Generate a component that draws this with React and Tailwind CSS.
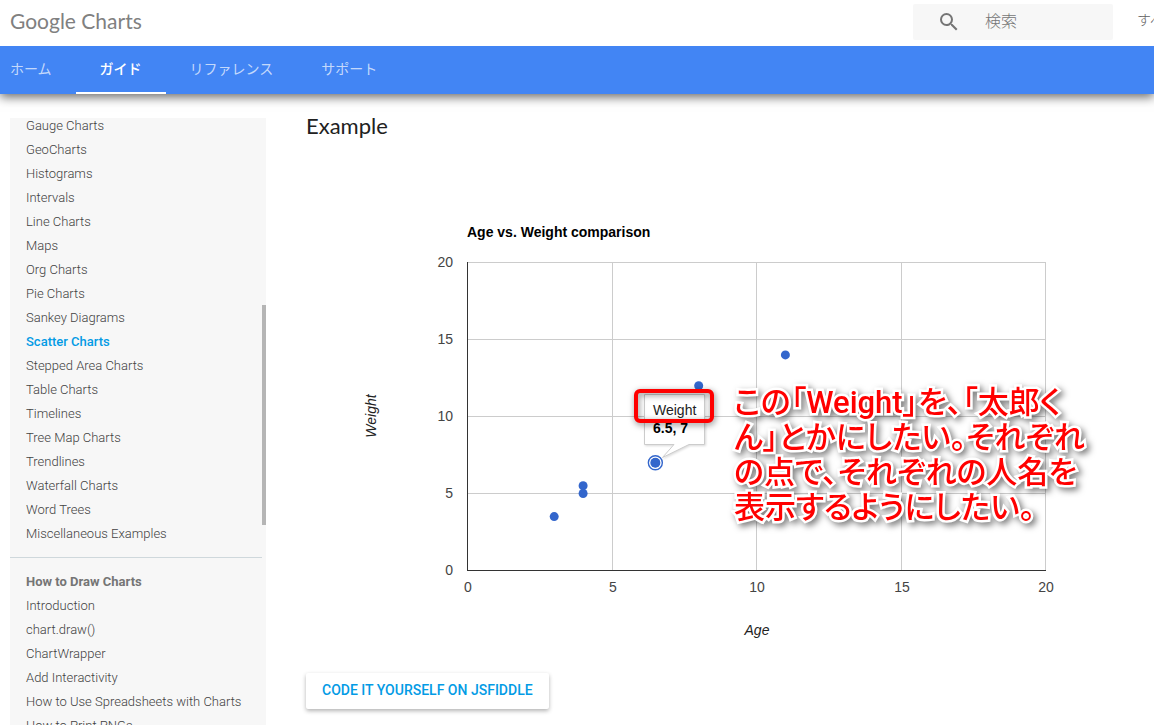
import { MdSearch } from "react-icons/md";

const tabs = ["ホーム", "ガイド", "リファレンス", "サポート"];

const chartTypes = [
  "Gauge Charts",
  "GeoCharts",
  "Histograms",
  "Intervals",
  "Line Charts",
  "Maps",
  "Org Charts",
  "Pie Charts",
  "Sankey Diagrams",
  "Scatter Charts",
  "Stepped Area Charts",
  "Table Charts",
  "Timelines",
  "Tree Map Charts",
  "Trendlines",
  "Waterfall Charts",
  "Word Trees",
  "Miscellaneous Examples",
];

const howTo = [
  "Introduction",
  "chart.draw()",
  "ChartWrapper",
  "Add Interactivity",
  "How to Use Spreadsheets with Charts",
  "How to Print PNGs",
];

const points = [
  [8, 12],
  [4, 5.5],
  [11, 14],
  [4, 5],
  [3, 3.5],
  [6.5, 7],
];

const ticks = [0, 5, 10, 15, 20];

// Plot area: 578 x 308, origin at (161, 403)
const px = (age) => 161 + age * 28.9;
const py = (weight) => 403 - weight * 15.4;

function Header() {
  return (
    <header className="relative z-20 flex h-[46px] shrink-0 items-start overflow-hidden bg-white pl-[10px]">
      <a href="#" className="pt-[3px] font-['Lato',sans-serif] text-[21px] leading-9 text-[#808080]">
        Google Charts
      </a>
      <form className="mt-1 ml-auto flex h-9 w-[200px] shrink-0 items-center rounded-xs bg-[#f7f7f7] pl-6">
        <label htmlFor="search">
          <MdSearch size={24} className="text-[#757575]" />
        </label>
        <input
          id="search"
          type="text"
          placeholder="検索"
          className="ml-6 w-24 bg-transparent text-base font-light outline-none placeholder:text-[#757575]"
        />
      </form>
      <button className="mt-1 ml-6 w-[17px] shrink-0 overflow-hidden text-left text-sm leading-8 font-light whitespace-nowrap text-[#616161]">
        すべて
      </button>
    </header>
  );
}

function Tabs() {
  return (
    <nav className="relative z-10 flex h-12 shrink-0 bg-[#4285f4] shadow-[0_3px_10px_rgba(0,0,0,0.6)]">
      <div className="-ml-[14px] flex">
        {tabs.map((tab) => (
          <a
            key={tab}
            href="#"
            className={
              tab === "ガイド"
                ? "border-b-2 border-white px-6 text-sm leading-[46px] font-medium text-white"
                : "px-6 text-sm leading-[46px] text-white/70"
            }
          >
            {tab}
          </a>
        ))}
      </div>
    </nav>
  );
}

function Sidebar() {
  return (
    <aside className="relative mt-6 ml-[10px] w-64 shrink-0 overflow-hidden bg-[#f7f7f7] text-[13px] leading-6 font-light text-[#424242]">
      <ul className="-mt-1 mr-1 border-b border-[#cfd8dc] pb-[11px] pl-4">
        {chartTypes.map((item) => (
          <li key={item}>
            <a href="#" className={item === "Scatter Charts" ? "font-medium text-[#039be5]" : ""}>
              {item}
            </a>
          </li>
        ))}
      </ul>
      <h3 className="mt-3 pl-4 font-bold text-[#757575]">How to Draw Charts</h3>
      <ul className="pl-4">
        {howTo.map((item) => (
          <li key={item}>
            <a href="#">{item}</a>
          </li>
        ))}
      </ul>
      {/* Scroll thumb */}
      <div className="absolute top-[187px] right-0 h-[220px] w-1 bg-[#b5b5b5]" />
    </aside>
  );
}

function ScatterChart() {
  return (
    <svg
      width="848"
      height="500"
      className="block font-['Liberation_Sans',Arial,sans-serif] text-sm"
      role="img"
      aria-label="Age vs. Weight comparison"
    >
      <text x="161" y="70" className="fill-black font-bold">
        Age vs. Weight comparison
      </text>

      {ticks.map((t) => (
        <g key={t} className="fill-[#444444]">
          <rect x={Math.round(px(t))} y="95" width="1" height="309" className="fill-[#cccccc]" />
          <rect x="161" y={Math.round(py(t))} width="579" height="1" className="fill-[#cccccc]" />
          <text x={Math.round(px(t)) + 1} y="425" textAnchor="middle">{t}</text>
          <text x="147" y={py(t) + 5} textAnchor="end">{t}</text>
        </g>
      ))}
      <rect x="161" y="95" width="1" height="309" className="fill-[#333333]" />
      <rect x="161" y="403" width="579" height="1" className="fill-[#333333]" />

      <text x="451" y="468" textAnchor="middle" className="fill-[#222222] italic">Age</text>
      <text transform="translate(70 249) rotate(-90)" textAnchor="middle" className="fill-[#222222] italic">
        Weight
      </text>

      {points.map(([age, weight]) => (
        <circle key={`${age}-${weight}`} cx={px(age) + 0.5} cy={py(weight) + 0.5} r="4.5" fill="#3366cc" />
      ))}
      {/* Selected point */}
      <circle cx={px(6.5) + 0.5} cy={py(7) + 0.5} r="5" fill="#3366cc" />
      <circle cx={px(6.5) + 0.5} cy={py(7) + 0.5} r="7" fill="none" stroke="#3366cc" strokeWidth="1.4" />

      {/* Tooltip */}
      <path
        d="M338.5 227.5H398.5V277.5H383L356.5 290.5L368 277.5H338.5Z"
        fill="#ffffff"
        stroke="#cccccc"
        className="drop-shadow-[1px_1px_1px_rgba(0,0,0,0.15)]"
      />
      <text x="347" y="248" className="fill-[#222222]">Weight</text>
      <text x="347" y="266" className="fill-black font-bold">6.5, 7</text>
      <rect
        x="330"
        y="224"
        width="76"
        height="30"
        rx="4"
        fill="none"
        stroke="#ff0000"
        strokeWidth="4"
        className="drop-shadow-[1px_2px_3px_rgba(0,0,0,0.5)]"
      />
    </svg>
  );
}

function Note() {
  return (
    <p className="absolute top-[218px] left-[428px] text-[31px] leading-[35px] font-medium whitespace-nowrap text-[#ff0000] drop-shadow-[3px_3px_3px_rgba(0,0,0,0.5)] [-webkit-text-stroke:5px_white] [font-feature-settings:'palt'] [paint-order:stroke_fill]">
      この「Weight」を、「太郎く
      <br />
      ん」とかにしたい。それぞれ
      <br />
      の点で、それぞれの人名を
      <br />
      表示するようにしたい。
    </p>
  );
}

export default function App() {
  return (
    <div className="flex h-screen flex-col overflow-hidden bg-white font-['Roboto','Noto_Sans_CJK_JP',sans-serif]">
      <Header />
      <Tabs />
      <div className="flex min-h-0 flex-1">
        <Sidebar />
        <main className="ml-10 min-w-0 flex-1 pt-4">
          <h2 className="font-['Lato',sans-serif] text-[22px] leading-8 text-[#212121]">Example</h2>
          <div className="relative mt-[25px]">
            <ScatterChart />
            <Note />
          </div>
          <button className="mt-[6px] h-9 rounded-xs bg-white px-4 pb-[2px] text-sm font-medium text-[#039be5] shadow-[0_2px_4px_rgba(0,0,0,0.3)]">
            CODE IT YOURSELF ON JSFIDDLE
          </button>
        </main>
      </div>
    </div>
  );
}
